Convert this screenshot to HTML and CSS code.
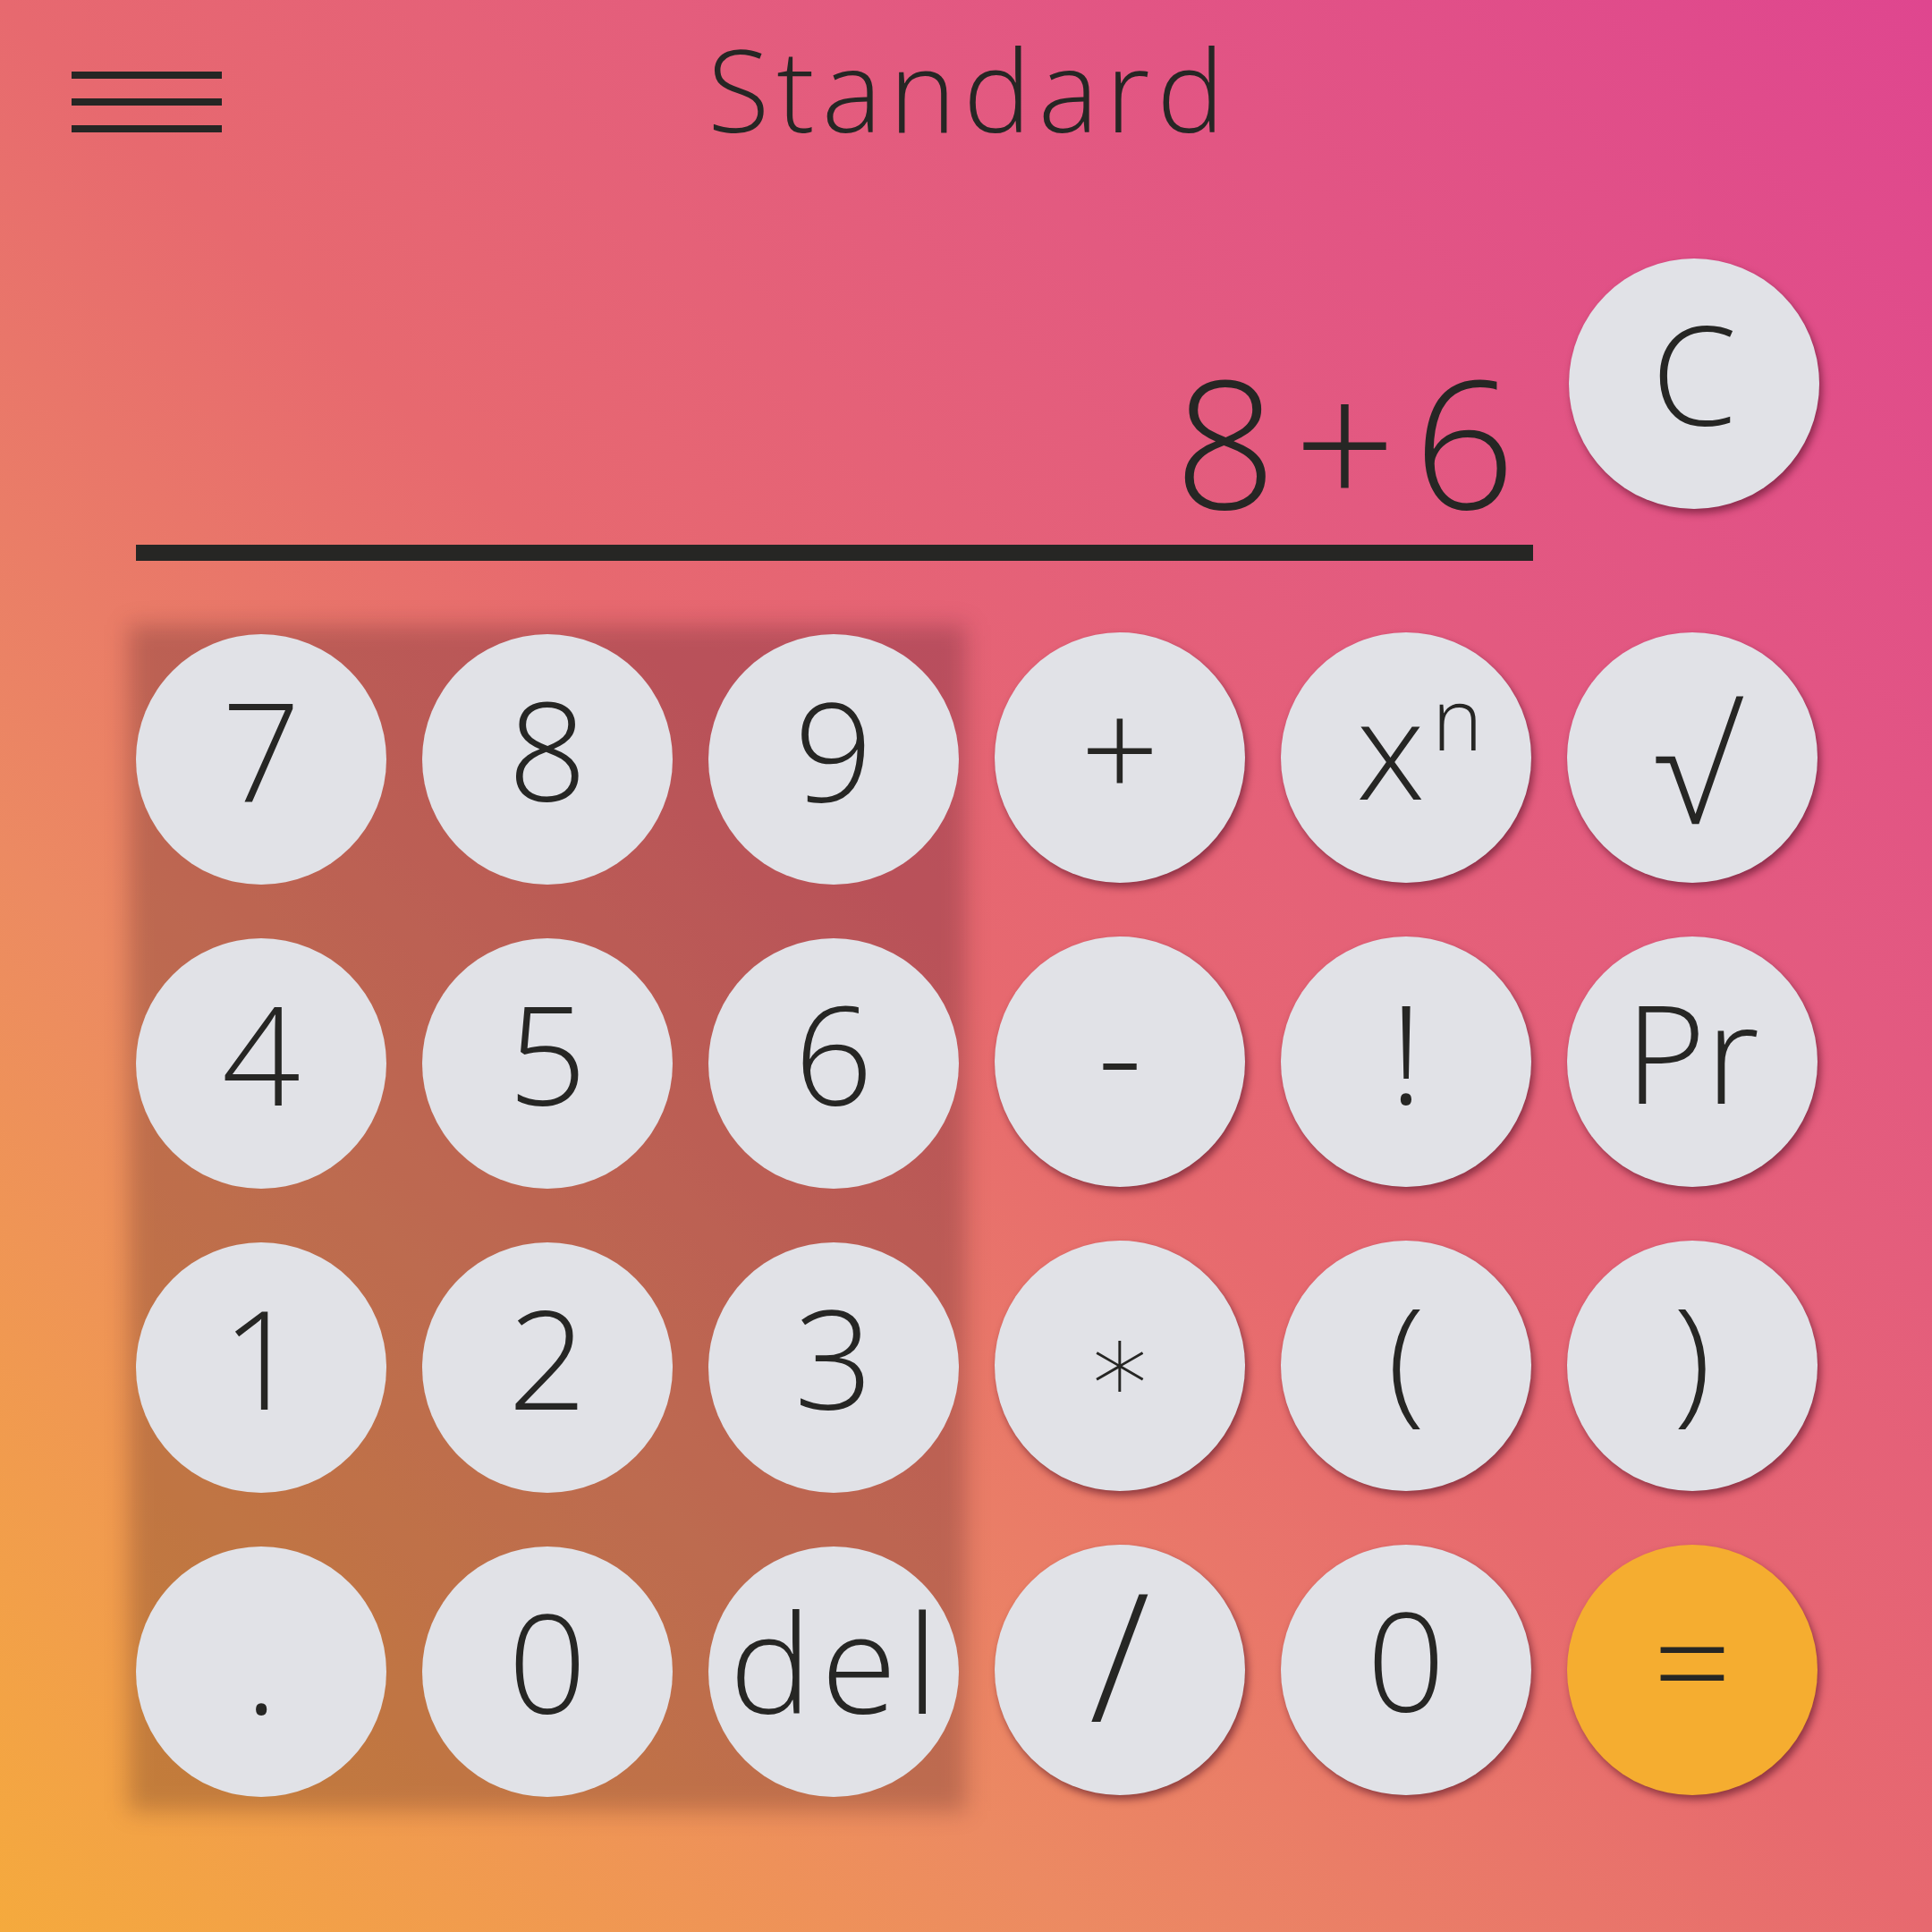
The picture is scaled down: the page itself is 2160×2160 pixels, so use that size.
FILE: index.html
```html
<!DOCTYPE html>
<html lang="en">
<head>
<meta charset="utf-8">
<title>Calculator</title>
<link rel="stylesheet" href="styles.css">
</head>
<body>
<div class="app">
  <header class="top">
    <button class="menu" aria-label="Menu"><span></span><span></span><span></span></button>
    <h1 class="title">Standard</h1>
    <div class="spacer"></div>
  </header>

  <section class="screen">
    <div class="display">
      <div class="expr">8+6</div>
      <div class="rule"></div>
    </div>
    <button class="key shadow">C</button>
  </section>

  <section class="pad">
    <div class="nums">
      <button class="key">7</button>
      <button class="key">8</button>
      <button class="key">9</button>
      <button class="key">4</button>
      <button class="key">5</button>
      <button class="key">6</button>
      <button class="key">1</button>
      <button class="key">2</button>
      <button class="key">3</button>
      <button class="key">.</button>
      <button class="key">0</button>
      <button class="key"><span class="lbl-del">del</span></button>
    </div>
    <div class="ops">
      <button class="key shadow">+</button>
      <button class="key shadow"><span class="lbl-pow">x<sup>n</sup></span></button>
      <button class="key shadow"><span class="lbl-root">√</span></button>
      <button class="key shadow">-</button>
      <button class="key shadow">!</button>
      <button class="key shadow">Pr</button>
      <button class="key shadow"><span class="lbl-star">*</span></button>
      <button class="key shadow">(</button>
      <button class="key shadow">)</button>
      <button class="key shadow"><span class="lbl-slash">/</span></button>
      <button class="key shadow">0</button>
      <button class="key shadow equals">=</button>
    </div>
  </section>
</div>
</body>
</html>
```

FILE: styles.css
```css
html, body {
  margin: 0;
  padding: 0;
}

body {
  width: 2160px;
  height: 2160px;
  overflow: hidden;
  background: linear-gradient(45deg, #f5aa3d 0%, #ec8a62 28%, #e7696f 50%, #e35a80 72%, #df468f 100%);
  font-family: "Open Sans", "Lato", "Liberation Sans", sans-serif;
  font-weight: 300;
  color: #262624;
}

.app {
  width: 2160px;
  height: 2160px;
  display: flex;
  flex-direction: column;
}

.top {
  display: grid;
  grid-template-columns: 1fr auto 1fr;
  align-items: start;
  padding: 35px 80px 0 80px;
}

.menu {
  margin-top: 45px;
  width: 168px;
  padding: 0;
  border: none;
  background: none;
  display: flex;
  flex-direction: column;
  gap: 22px;
}

.menu span {
  display: block;
  height: 8px;
  width: 168px;
  background: #262624;
}

.title {
  margin: 0 0 0 8px;
  font-size: 127px;
  font-weight: 300;
  line-height: 1;
  letter-spacing: 8px;
}

.screen {
  margin: 127px 0 0 152px;
  width: 1882px;
  display: grid;
  grid-template-columns: 1fr 280px;
  column-gap: 40px;
  align-items: start;
}

.display {
  height: 338px;
  display: flex;
  flex-direction: column;
  justify-content: flex-end;
  align-items: stretch;
}

.expr {
  text-align: right;
  font-size: 199px;
  line-height: 1;
  padding-right: 0;
  letter-spacing: 20px;
}

.rule {
  margin-top: 18px;
  height: 18px;
  background: #262624;
}

.pad {
  margin: 80px 0 0 152px;
  display: flex;
  gap: 40px;
  align-items: flex-start;
}

.nums, .ops {
  display: grid;
  grid-template-columns: repeat(3, 280px);
  grid-auto-rows: 280px;
  column-gap: 40px;
  row-gap: 60px;
}

.nums {
  position: relative;
  isolation: isolate;
  margin-top: 2px;
}

.nums::before {
  content: "";
  position: absolute;
  inset: -10px -8px -16px -8px;
  background: rgba(40, 10, 20, 0.24);
  filter: blur(13px);
  z-index: -1;
}

.key {
  width: 280px;
  height: 280px;
  border-radius: 50%;
  border: none;
  background: #e1e2e7;
  color: #262624;
  font-family: "Open Sans", "Lato", "Liberation Sans", sans-serif;
  font-weight: 300;
  font-size: 154px;
  line-height: 1;
  padding: 0 0 26px 0;
  display: flex;
  align-items: center;
  justify-content: center;
}

.key.shadow {
  box-shadow: 3px 5px 9px rgba(70, 10, 30, 0.55);
}

.key.equals {
  background: #f5ad30;
}

.lbl-pow {
  padding-left: 30px;
}

.lbl-pow sup {
  font-size: 0.62em;
  vertical-align: 0;
  position: relative;
  top: -0.58em;
  margin-left: 8px;
}

.lbl-root {
  font-size: 174px;
  position: relative;
  top: 19px;
  left: 4px;
}

.lbl-slash {
  font-size: 199px;
  position: relative;
  top: -7px;
}

.lbl-star {
  font-family: "DejaVu Sans", sans-serif;
  font-weight: 200;
  font-size: 125px;
  position: relative;
  top: 34px;
}

.lbl-del {
  letter-spacing: 11px;
  margin-right: -11px;
}
```
